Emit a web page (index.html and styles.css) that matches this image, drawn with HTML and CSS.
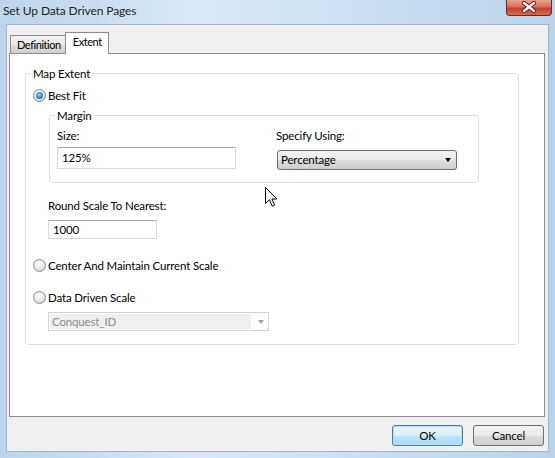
FILE: index.html
```html
<!DOCTYPE html>
<html>
<head>
<meta charset="utf-8">
<title>Set Up Data Driven Pages</title>
<link rel="stylesheet" href="styles.css">
</head>
<body>
<div class="window">
  <div class="titlebar">
    <span class="title">Set Up Data Driven Pages</span>
    <div class="close-btn">
      <svg width="46" height="16" viewBox="0 0 46 16">
        <path d="M18 4 L28 12 M28 4 L18 12" stroke="#5a1a12" stroke-width="4.2" stroke-linecap="round"/>
        <path d="M18 4 L28 12 M28 4 L18 12" stroke="#ffffff" stroke-width="2.4" stroke-linecap="round"/>
      </svg>
    </div>
  </div>
  <div class="client">
    <div class="tabs">
      <div class="tab">Definition</div>
      <div class="tab tab-active">Extent</div>
    </div>
    <div class="panel">
      <fieldset class="group group-main">
        <legend>Map Extent</legend>
        <div class="radio-row row-bestfit">
          <span class="radio radio-checked"></span>
          <span>Best Fit</span>
        </div>
        <fieldset class="group group-margin">
          <legend>Margin</legend>
          <div class="margin-grid">
            <div class="field">
              <span class="label">Size:</span>
              <div class="textbox textbox-size">125%</div>
            </div>
            <div class="field">
              <span class="label">Specify Using:</span>
              <div class="combo">
                <span>Percentage</span>
                <span class="combo-arrow"></span>
              </div>
            </div>
          </div>
        </fieldset>
        <div class="round-block">
          <span class="label">Round Scale To Nearest:</span>
          <div class="textbox textbox-round">1000</div>
        </div>
        <div class="radio-row row-center">
          <span class="radio"></span>
          <span>Center And Maintain Current Scale</span>
        </div>
        <div class="radio-row row-data">
          <span class="radio"></span>
          <span>Data Driven Scale</span>
        </div>
        <div class="combo-disabled">
          <span class="combo-disabled-field">Conquest_ID</span>
          <span class="combo-arrow combo-arrow-disabled"></span>
        </div>
      </fieldset>
    </div>
    <div class="buttons">
      <div class="btn btn-default">OK</div>
      <div class="btn">Cancel</div>
    </div>
  </div>
  <svg class="cursor" width="13" height="21" viewBox="0 0 13 21">
    <path d="M0.5 0.5 L0.5 16.5 L4.5 12.8 L7.2 19.2 L9.6 18.2 L7 12 L12 12 Z" fill="#ffffff" stroke="#000000" stroke-width="1" stroke-linejoin="miter"/>
  </svg>
</div>
</body>
</html>
```

FILE: styles.css
```css
* {
  box-sizing: border-box;
}

body {
  margin: 0;
  font-family: Lato, "Noto Sans", sans-serif;
  font-size: 11.5px;
  letter-spacing: -0.15px;
  color: #000;
}

.window {
  position: relative;
  width: 555px;
  height: 458px;
  display: flex;
  flex-direction: column;
  background: linear-gradient(90deg, #bcd4ec 0%, #dae8f6 35%, #cadef1 70%, #b9d2ea 100%);
  overflow: hidden;
}

.titlebar {
  position: relative;
  height: 24px;
  flex: none;
}

.title {
  position: absolute;
  left: 3px;
  top: 2px;
  font-size: 12px;
  letter-spacing: -0.1px;
  line-height: 17px;
  color: #1e1e1e;
}

.close-btn {
  position: absolute;
  left: 506px;
  top: 0;
  width: 46px;
  height: 16px;
  border: 1px solid #6b2a20;
  border-top: none;
  border-radius: 0 0 4px 4px;
  background: linear-gradient(180deg, #e8a493 0%, #d8705a 45%, #c0412b 55%, #d26a4e 100%);
  overflow: hidden;
}

.close-btn svg {
  display: block;
  margin: -1px 0 0 -1px;
}

.client {
  flex: 1;
  margin: 0 6px 6px 6px;
  background: #f0f0f0;
  border: 1px solid #a5b6c8;
  padding: 7px 4px 0 2px;
  display: flex;
  flex-direction: column;
}

.tabs {
  display: flex;
  align-items: flex-end;
  height: 21px;
  padding-left: 1px;
  position: relative;
  z-index: 1;
}

.tab {
  height: 18px;
  padding: 0 4px 0 6px;
  font-size: 11px;
  letter-spacing: -0.45px;
  line-height: 17px;
  border: 1px solid #898c95;
  border-bottom: none;
  background: linear-gradient(180deg, #f2f2f2 0%, #ebebeb 50%, #dddddd 51%, #cfcfcf 100%);
}

.tab + .tab {
  margin-left: -1px;
}

.tab-active {
  height: 22px;
  margin-bottom: -1px;
  background: #ffffff;
  padding: 0 6px 0 7px;
  line-height: 18px;
}

.panel {
  width: 536px;
  height: 364px;
  background: #ffffff;
  border: 1px solid #898c95;
  padding: 0 0 0 15px;
}

.group {
  border: 1px solid #d5dfe5;
  border-radius: 3px;
  margin: 0;
}

.group legend {
  padding: 0 2px;
  margin-left: -2px;
  line-height: 15px;
}

.group-main {
  width: 494px;
  margin-top: 12px;
  padding: 0 0 13px 7px;
}

.radio-row {
  display: flex;
  align-items: center;
  height: 15px;
  line-height: 15px;
  gap: 2px;
}

.radio {
  width: 13px;
  height: 13px;
  border-radius: 50%;
  border: 1px solid #8f8f8f;
  background: radial-gradient(circle at 40% 35%, #fbfbfb 0%, #e6e6e6 55%, #cbcbcb 100%);
  display: flex;
  align-items: center;
  justify-content: center;
  flex: none;
}

.radio-checked {
  border-color: #7a8a99;
}

.radio-checked::after {
  content: "";
  width: 7px;
  height: 7px;
  border-radius: 50%;
  background: radial-gradient(circle at 45% 40%, #8fd2f7 0%, #3b89c2 50%, #1a4f86 100%);
}

.row-bestfit {
  margin-top: 7px;
}

.group-margin {
  width: 430px;
  margin-top: 5px;
  margin-left: 16px;
  padding: 0 0 12px 7px;
}

.margin-grid {
  display: grid;
  grid-template-columns: 179px 180px;
  column-gap: 40px;
  margin-top: 5px;
}

.field {
  display: flex;
  flex-direction: column;
  align-items: flex-start;
}

.label {
  line-height: 15px;
}

.textbox {
  background: #fff;
  border: 1px solid #d6dbe0;
  border-top-color: #abadb3;
  padding-left: 4px;
}

.textbox-size {
  width: 179px;
  height: 22px;
  line-height: 20px;
  margin-top: 4px;
}

.combo {
  width: 180px;
  height: 20px;
  margin-top: 7px;
  margin-left: 1px;
  border: 1px solid #707070;
  border-radius: 3px;
  background: linear-gradient(180deg, #f2f2f2 0%, #ebebeb 50%, #dddddd 51%, #cfcfcf 100%);
  display: flex;
  align-items: center;
  justify-content: space-between;
  padding: 0 5px 0 3px;
  line-height: 18px;
}

.combo-arrow {
  width: 0;
  height: 0;
  border-left: 3.5px solid transparent;
  border-right: 3.5px solid transparent;
  border-top: 4px solid #000;
}

.round-block {
  display: flex;
  flex-direction: column;
  align-items: flex-start;
  margin-top: 15px;
  margin-left: 15px;
}

.textbox-round {
  width: 109px;
  height: 19px;
  line-height: 17px;
  margin-top: 7px;
}

.row-center {
  margin-top: 19px;
}

.row-data {
  margin-top: 17px;
}

.combo-disabled {
  width: 221px;
  height: 19px;
  margin-top: 7px;
  margin-left: 15px;
  border: 1px solid #d3d3d3;
  background: #fff;
  display: flex;
  align-items: center;
  padding: 1px;
}

.combo-disabled-field {
  width: 201px;
  height: 15px;
  line-height: 15px;
  background: #efefef;
  color: #8d8d8d;
  padding-left: 2px;
}

.combo-arrow-disabled {
  margin-left: 7px;
  border-top-color: #a0a0a0;
}

.buttons {
  display: flex;
  justify-content: flex-end;
  gap: 10px;
  margin-top: 8px;
}

.btn {
  width: 71px;
  height: 21px;
  border: 1px solid #707070;
  border-radius: 3px;
  background: linear-gradient(180deg, #f2f2f2 0%, #ebebeb 50%, #dddddd 51%, #cfcfcf 100%);
  text-align: center;
  line-height: 19px;
}

.btn-default {
  border-color: #3c7fb1;
  background: linear-gradient(180deg, #eaf6fd 0%, #d9f0fc 50%, #bee6fd 51%, #a7d9f5 100%);
  box-shadow: inset 0 0 0 1px #b6e1f9;
}

.cursor {
  position: absolute;
  left: 265px;
  top: 187px;
}
```
